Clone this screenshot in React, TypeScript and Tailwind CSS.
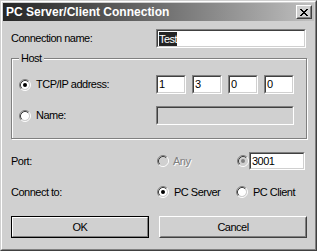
import React from 'react';

const Radio = ({ checked = false, disabled = false }: { checked?: boolean; disabled?: boolean }) => (
  <svg width="12" height="12" viewBox="0 0 12 12" className="shrink-0">
    <circle cx="6" cy="6" r="4" fill={disabled ? '#d0d0d0' : '#ffffff'} />
    <path d="M2.11 9.89A5.5 5.5 0 0 1 9.89 2.11" stroke="#808080" fill="none" />
    <path d="M9.89 2.11A5.5 5.5 0 0 1 2.11 9.89" stroke="#ffffff" fill="none" />
    <path d="M2.82 9.18A4.5 4.5 0 0 1 9.18 2.82" stroke="#404040" fill="none" />
    <path d="M9.18 2.82A4.5 4.5 0 0 1 2.82 9.18" stroke="#d0d0d0" fill="none" />
    {checked && <circle cx="6" cy="6" r="2" fill={disabled ? '#808080' : '#000000'} />}
  </svg>
);

// sunken edit box, win2000 style
const Field = ({ className, disabled = false, children }: { className: string; disabled?: boolean; children?: React.ReactNode }) => (
  <div className={`border border-t-[#808080] border-l-[#808080] border-b-white border-r-white ${className}`}>
    <div
      className={`h-full border border-t-[#404040] border-l-[#404040] border-b-[#d0d0d0] border-r-[#d0d0d0] flex items-center pl-[1px] ${
        disabled ? 'bg-[#d0d0d0]' : 'bg-white'
      }`}
    >
      {children}
    </div>
  </div>
);

const CloseGlyph = () => (
  <svg width="8" height="7" viewBox="0 0 8 7" shapeRendering="crispEdges">
    <path d="M0 0h2v1H0zM6 0h2v1H6zM1 1h2v1H1zM5 1h2v1H5zM2 2h4v1H2zM3 3h2v1H3zM2 4h4v1H2zM1 5h2v1H1zM5 5h2v1H5zM0 6h2v1H0zM6 6h2v1H6z" fill="#000" />
  </svg>
);

export default function App() {
  return (
    <div className="w-[317px] h-[251px] overflow-hidden bg-[#d0d0d0] font-['Liberation_Sans',Arial,sans-serif] text-[11px] tracking-[-0.5px] text-black border border-t-[#d0d0d0] border-l-[#d0d0d0] border-b-[#404040] border-r-[#404040]">
      <div className="h-full border border-t-white border-l-white border-b-[#808080] border-r-[#808080] p-[1px] flex flex-col">
        {/* title bar */}
        <div className="h-[18px] shrink-0 flex items-center justify-between pl-[3px] pr-[2px] bg-gradient-to-r from-[#262626] to-[#c0c0c0]">
          <span className="text-white font-bold text-[12px] tracking-normal leading-none">PC Server/Client Connection</span>
          <div className="w-[16px] h-[14px] border border-t-white border-l-white border-b-[#404040] border-r-[#404040] bg-[#d0d0d0]">
            <div className="h-full border border-t-[#d0d0d0] border-l-[#d0d0d0] border-b-[#808080] border-r-[#808080] flex items-center justify-center">
              <CloseGlyph />
            </div>
          </div>
        </div>

        <div className="pl-[8px] flex flex-col">
          {/* connection name */}
          <div className="mt-[8px] h-[19px] flex items-center">
            <span className="w-[145px]">Connection name:</span>
            <Field className="w-[150px] h-[19px]">
              <span className="bg-[#242424] text-white leading-[14px]">Test</span>
            </Field>
          </div>

          {/* host group */}
          <div className="relative mt-[10px] w-[296px] h-[81px] border border-[#808080] shadow-[inset_1px_1px_0_#fff,1px_1px_0_#fff] pt-[16px] pl-[7px]">
            <span className="absolute left-[7px] top-[-8px] px-[2px] bg-[#d0d0d0] leading-[14px]">Host</span>
            <div className="h-[19px] flex items-center">
              <div className="w-[137px] flex items-center gap-[5px]">
                <Radio checked />
                <span>TCP/IP address:</span>
              </div>
              <div className="flex gap-[6px]">
                <Field className="w-[30px] h-[19px]">1</Field>
                <Field className="w-[30px] h-[19px]">3</Field>
                <Field className="w-[30px] h-[19px]">0</Field>
                <Field className="w-[30px] h-[19px]">0</Field>
              </div>
            </div>
            <div className="mt-[12px] h-[19px] flex items-center">
              <div className="w-[137px] flex items-center gap-[5px]">
                <Radio />
                <span>Name:</span>
              </div>
              <Field className="w-[138px] h-[19px]" disabled />
            </div>
          </div>

          {/* port */}
          <div className="mt-[13px] h-[18px] flex items-center">
            <span className="w-[146px]">Port:</span>
            <div className="w-[80px] flex items-center gap-[4px]">
              <Radio disabled />
              <span className="text-[#808080] [text-shadow:1px_1px_0_#fff]">Any</span>
            </div>
            <Radio checked disabled />
            <Field className="w-[56px] h-[18px]">3001</Field>
          </div>

          {/* connect to */}
          <div className="mt-[13px] h-[18px] flex items-center">
            <span className="w-[146px]">Connect to:</span>
            <div className="w-[79px] flex items-center gap-[5px]">
              <Radio checked />
              <span>PC Server</span>
            </div>
            <div className="flex items-center gap-[5px]">
              <Radio />
              <span>PC Client</span>
            </div>
          </div>

          {/* buttons */}
          <div className="mt-[15px] flex gap-[10px]">
            <div className="w-[138px] h-[22px] border border-black">
              <div className="h-full border border-t-white border-l-white border-b-[#808080] border-r-[#808080] flex items-center justify-center">
                OK
              </div>
            </div>
            <div className="w-[148px] h-[22px] border border-t-white border-l-white border-b-[#404040] border-r-[#404040]">
              <div className="h-full border border-t-[#d0d0d0] border-l-[#d0d0d0] border-b-[#808080] border-r-[#808080] flex items-center justify-center">
                Cancel
              </div>
            </div>
          </div>
        </div>
      </div>
    </div>
  );
}
